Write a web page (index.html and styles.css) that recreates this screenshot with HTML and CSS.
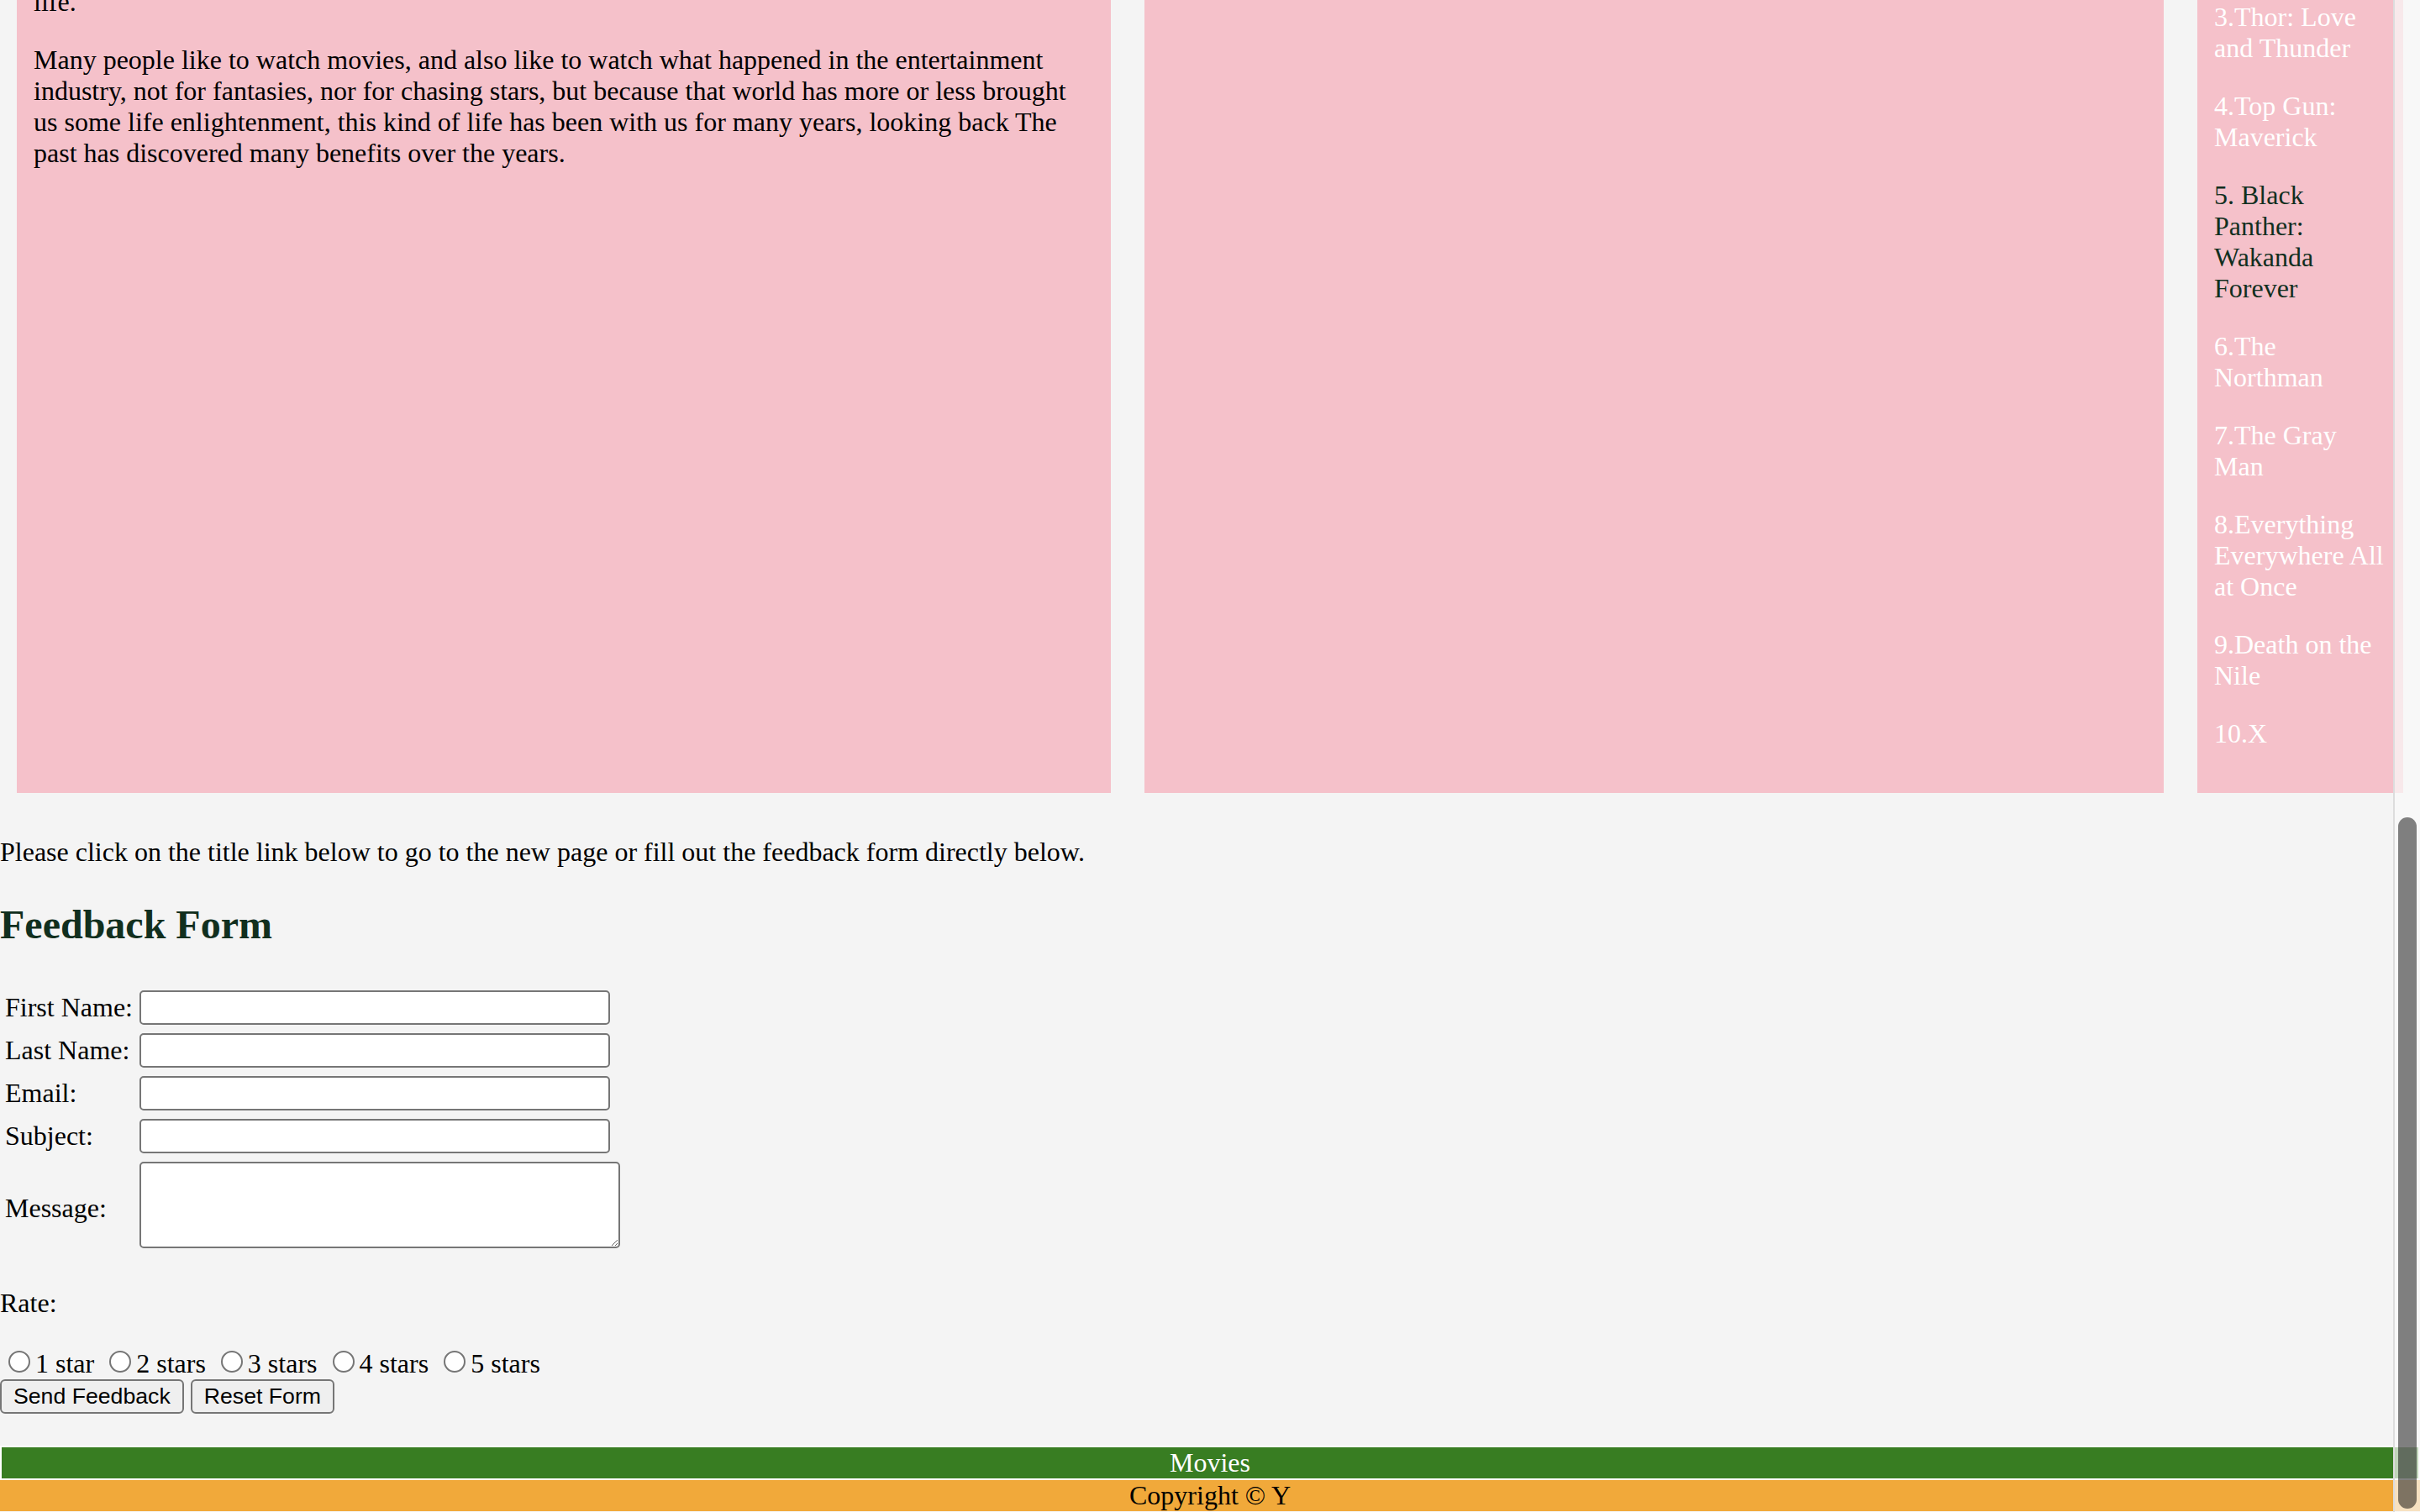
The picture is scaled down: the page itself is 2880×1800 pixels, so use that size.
FILE: index.html
```html
<!DOCTYPE html>
<html lang="en">
<head>
<meta charset="utf-8">
<title>Movies</title>
<link rel="stylesheet" href="styles.css">
</head>
<body>
<div class="page">
  <div class="cards">
    <div class="card card-main">
      <p class="lead-tail">life.</p>
      <p>Many people like to watch movies, and also like to watch what happened in the entertainment industry, not for fantasies, nor for chasing stars, but because that world has more or less brought us some life enlightenment, this kind of life has been with us for many years, looking back The past has discovered many benefits over the years.</p>
    </div>
    <div class="card card-media"></div>
    <div class="card card-list">
      <p class="first"><a href="#">3.Thor: Love and Thunder</a></p>
      <p><a href="#">4.Top Gun: Maverick</a></p>
      <p class="current">5. Black Panther: Wakanda Forever</p>
      <p><a href="#">6.The Northman</a></p>
      <p><a href="#">7.The Gray Man</a></p>
      <p><a href="#">8.Everything Everywhere All at Once</a></p>
      <p><a href="#">9.Death on the Nile</a></p>
      <p><a href="#">10.X</a></p>
    </div>
  </div>

  <p class="intro">Please click on the title link below to go to the new page or fill out the feedback form directly below.</p>

  <h2 class="form-title">Feedback Form</h2>

  <form class="feedback">
    <table class="fields">
      <tr><td>First Name:</td><td><input type="text" class="field"></td></tr>
      <tr><td>Last Name:</td><td><input type="text" class="field"></td></tr>
      <tr><td>Email:</td><td><input type="text" class="field"></td></tr>
      <tr><td>Subject:</td><td><input type="text" class="field"></td></tr>
      <tr><td>Message:</td><td><textarea class="message"></textarea></td></tr>
    </table>
    <p class="rate-label">Rate:</p>
    <div class="rating"><input type="radio" name="rate" class="radio">1 star <input type="radio" name="rate" class="radio">2 stars <input type="radio" name="rate" class="radio">3 stars <input type="radio" name="rate" class="radio">4 stars <input type="radio" name="rate" class="radio">5 stars</div>
    <div class="actions"><button type="submit" class="btn">Send Feedback</button> <button type="reset" class="btn">Reset Form</button></div>
  </form>

  <nav class="footer-nav"><a href="#">Movies</a></nav>
  <footer class="copyright">Copyright © Y</footer>
</div>
<div class="scrollbar"><div class="thumb"></div></div>
</body>
</html>
```
FILE: styles.css
```css
html {
  height: 1800px;
  overflow: hidden;
}
body {
  margin: 0;
  height: 1800px;
  overflow: hidden;
  background: #f4f4f4;
  font-family: "Liberation Serif", "Times New Roman", serif;
  font-size: 32px;
  color: #000;
}
.page {
  margin-top: -88px;
}
.cards {
  display: flex;
  align-items: stretch;
}
.card {
  background: #f5c1ca;
  margin: 20px;
  padding: 20px;
  box-sizing: border-box;
}
.card p {
  margin: 32px 0;
}
.card-main {
  flex: 0 0 1302px;
}
.card-media {
  flex: 0 0 1213px;
}
.card-list {
  flex: 0 0 245px;
}
.card-list .first {
  margin-top: 50px;
}
.card-list a {
  color: #ffffff;
  text-decoration: none;
}
.card-list .current {
  color: #112f1e;
}
.intro {
  margin: 32px 0;
}
.form-title {
  color: #112f1e;
  font-size: 48px;
  font-weight: bold;
  margin: 40px 0 44px;
}
.feedback {
  margin: 0;
}
.fields {
  border-spacing: 4px;
  border-collapse: separate;
}
.fields td {
  padding: 2px;
  vertical-align: middle;
}
.field {
  display: block;
  box-sizing: border-box;
  width: 560px;
  height: 41px;
  margin: 1px 0;
  border: 2px solid #767676;
  border-radius: 5px;
  background: #fff;
  font-size: 26px;
  padding: 2px 4px;
}
.message {
  display: block;
  box-sizing: border-box;
  width: 572px;
  height: 103px;
  margin: 1px 0 9px;
  border: 2px solid #767676;
  border-radius: 5px;
  background: #fff;
  resize: both;
}
.rate-label {
  margin: 32px 0;
}
.rating {
  margin: 0;
}
.radio {
  -webkit-appearance: none;
  appearance: none;
  box-sizing: border-box;
  width: 26px;
  height: 26px;
  margin: 6px 6px 0 10px;
  border: 2px solid #767676;
  border-radius: 50%;
  background: #fff;
  vertical-align: baseline;
}
.actions {
  margin: 0;
  line-height: 1;
}
.btn {
  box-sizing: border-box;
  height: 41px;
  padding: 0 14px;
  margin: 0;
  border: 2px solid #767676;
  border-radius: 6px;
  background: #efefef;
  color: #000;
  font-family: "Liberation Sans", Arial, sans-serif;
  font-size: 26.67px;
}
.footer-nav {
  margin-top: 38px;
  border: 2px solid #fff;
  background: #387d22;
  text-align: center;
  height: 37px;
  line-height: 37px;
}
.footer-nav a {
  color: #fff;
  text-decoration: none;
}
.copyright {
  background: #f1a93a;
  text-align: center;
  height: 37px;
  line-height: 37px;
}
.scrollbar {
  position: fixed;
  top: 0;
  right: 0;
  width: 30px;
  height: 1800px;
  border-left: 2px solid #dddddd;
  background: rgba(250, 250, 250, 0.7);
}
.thumb {
  position: absolute;
  left: 4px;
  width: 22px;
  top: 973px;
  bottom: 4px;
  border-radius: 11px;
  background: rgba(0, 0, 0, 0.49);
}
```
